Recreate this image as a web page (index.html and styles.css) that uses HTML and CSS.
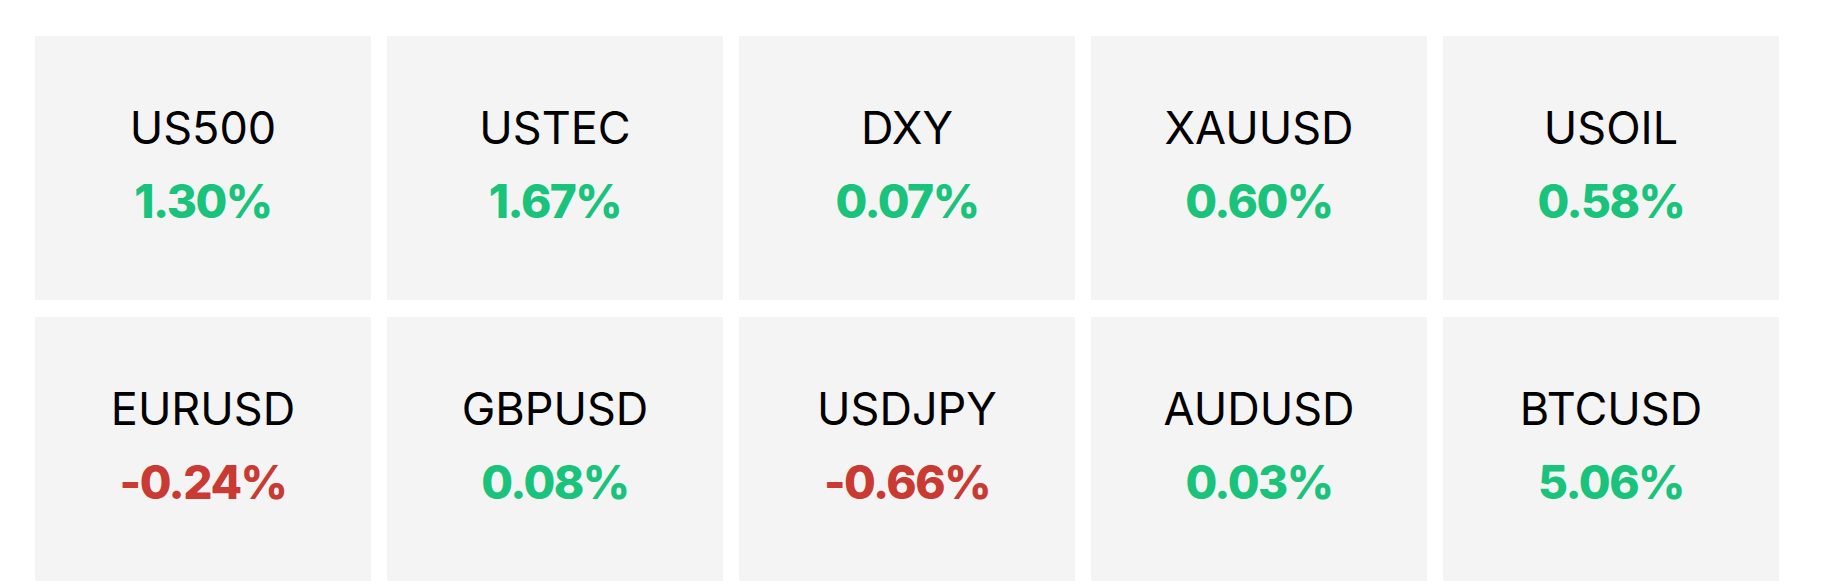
FILE: index.html
```html
<!DOCTYPE html>
<html lang="en">
  <head>
    <meta charset="UTF-8" />
    <meta name="viewport" content="width=device-width, initial-scale=1.0" />
    <title>Market overview</title>
    <link rel="stylesheet" href="styles.css">
  </head>
  <body>
    <!-- market tiles -->
    <div class="market-grid">
      <div class="tile">
        <p class="symbol">US500</p>
        <p class="change up">1.30%</p>
      </div>
      <div class="tile">
        <p class="symbol">USTEC</p>
        <p class="change up">1.67%</p>
      </div>
      <div class="tile">
        <p class="symbol">DXY</p>
        <p class="change up">0.07%</p>
      </div>
      <div class="tile">
        <p class="symbol">XAUUSD</p>
        <p class="change up">0.60%</p>
      </div>
      <div class="tile">
        <p class="symbol">USOIL</p>
        <p class="change up">0.58%</p>
      </div>
      <div class="tile">
        <p class="symbol">EURUSD</p>
        <p class="change down">-0.24%</p>
      </div>
      <div class="tile">
        <p class="symbol">GBPUSD</p>
        <p class="change up">0.08%</p>
      </div>
      <div class="tile">
        <p class="symbol">USDJPY</p>
        <p class="change down">-0.66%</p>
      </div>
      <div class="tile">
        <p class="symbol">AUDUSD</p>
        <p class="change up">0.03%</p>
      </div>
      <div class="tile">
        <p class="symbol">BTCUSD</p>
        <p class="change up">5.06%</p>
      </div>
    </div>
  </body>
</html>
```

FILE: styles.css
```css
/* ------- base */
body {
  margin: 0;
  background: #fff;
  color: #000;
  font-family: Inter, "Noto Sans", sans-serif;
}

/* ------- grid of market tiles */
.market-grid {
  display: grid;
  grid-template-columns: repeat(5, 336px);
  grid-auto-rows: 264px;
  gap: 17px 16px;
  padding: 36px 0 0 35px;
}

.tile {
  background-color: #f4f4f4;
  display: flex;
  flex-direction: column;
  align-items: center;
  justify-content: center;
  padding-bottom: 6px;
}

.tile p {
  margin: 0;
  white-space: nowrap;
}

.symbol {
  font-size: 45px;
  font-weight: 400;
  line-height: 56px;
}

.change {
  font-size: 46px;
  font-weight: 800;
  line-height: 58px;
  margin-top: 16px !important;
  letter-spacing: -1.5px;
}

/* Couleurs selon la variation */
.up {
  color: #19c37b;
}

.down {
  color: #c93a32;
}
```
